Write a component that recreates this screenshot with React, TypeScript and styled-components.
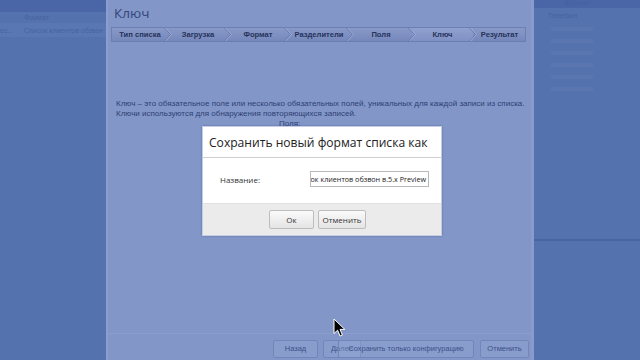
import styled, { createGlobalStyle } from 'styled-components';

const GlobalStyle = createGlobalStyle`
  html, body {
    margin: 0;
    padding: 0;
    overflow: hidden;
    background: #5472ad;
  }
  #root {
    width: 640px;
    height: 360px;
  }
`;

const Screen = styled.div`
  position: relative;
  width: 640px;
  height: 360px;
  overflow: hidden;
  display: grid;
  grid-template-columns: 106px 428px 1fr;
  background: #5472ad;
  font-family: 'Liberation Sans', Arial, sans-serif;
`;

/* list panes behind the wizard */
const SidePane = styled.div`
  display: flex;
  flex-direction: column;
  background: #5472ad;
  overflow: hidden;
`;

const PaneTopStrip = styled.div<{ $h: number }>`
  height: ${(p) => p.$h}px;
  flex: none;
  background: #4b66a6;
  color: #4560a0;
  font-size: 7px;
  line-height: 6px;
  padding-left: 30px;
  white-space: nowrap;
`;

const PaneRow = styled.div<{ $h: number; $shade?: boolean }>`
  height: ${(p) => p.$h}px;
  flex: none;
  display: flex;
  align-items: center;
  gap: 9px;
  background: ${(p) => (p.$shade ? '#5978b3' : 'transparent')};
  color: #4862a1;
  font-size: 7px;
  white-space: nowrap;
`;

const PaneCell = styled.span<{ $w?: number; $pad?: number }>`
  width: ${(p) => (p.$w ? `${p.$w}px` : 'auto')};
  padding-left: ${(p) => p.$pad ?? 0}px;
  overflow: hidden;
`;

const FaintLines = styled.div`
  display: flex;
  flex-direction: column;
  gap: 8px;
  padding: 4px 0 0 17px;
`;

const FaintLine = styled.div`
  width: 42px;
  height: 4px;
  background: #5a77b1;
  border-radius: 1px;
`;

const PaneSpacer = styled.div<{ $h: number }>`
  height: ${(p) => p.$h}px;
  flex: none;
`;

const PaneRule = styled.div`
  height: 2px;
  background: #4a64a3;
`;

/* wizard */
const Wizard = styled.div`
  display: flex;
  flex-direction: column;
  background: #8297c8;
  border-left: 2px solid #8a9ecf;
  border-right: 3px solid #889bcc;
  color: #2d3c70;
`;

const WizardTitle = styled.div`
  height: 27px;
  flex: none;
  padding-left: 6px;
  font-family: 'Open Sans', 'Noto Sans', sans-serif;
  font-size: 13.5px;
  line-height: 27px;
  color: #34457a;
`;

const Steps = styled.div`
  display: flex;
  height: 13px;
  margin: 0 5px 0 3px;
  background: linear-gradient(#8899c8, #7688bb);
  border: 1px solid #6d7fb2;
`;

const Step = styled.div<{ $w: number; $active?: boolean }>`
  position: relative;
  width: ${(p) => p.$w}px;
  flex: none;
  display: flex;
  align-items: center;
  justify-content: center;
  font-size: 7.6px;
  font-weight: bold;
  color: #26335c;
  background: ${(p) => (p.$active ? 'linear-gradient(#90a1cf, #7f91c3)' : 'transparent')};
  white-space: nowrap;
`;

const Chevron = styled.svg`
  position: absolute;
  right: -4px;
  top: 0;
  z-index: 1;
`;

const WizardBody = styled.div`
  flex: 1;
  padding: 57px 0 0 8px;
  font-size: 8px;
  line-height: 10px;
  color: #2f3f74;
`;

const Note = styled.p`
  margin: 0;
`;

const FieldsLabel = styled.div`
  margin: 0 0 0 163px;
  line-height: 9px;
`;

const WizardFooter = styled.div`
  height: 27px;
  flex: none;
  display: flex;
  justify-content: flex-end;
  align-items: center;
  padding: 3px 2px 0 0;
  box-sizing: border-box;
  border-top: 1px solid #8a9dcc;
`;

const FooterButton = styled.div<{ $w: number; $overlap?: number; $gap?: number }>`
  width: ${(p) => p.$w}px;
  height: 18px;
  box-sizing: border-box;
  margin-left: ${(p) => (p.$overlap ? -p.$overlap : p.$gap ?? 5)}px;
  display: flex;
  align-items: center;
  justify-content: center;
  border: 1px solid #7486b9;
  border-radius: 2px;
  background: rgba(150, 168, 212, 0.35);
  font-size: 7.5px;
  color: #3f5088;
  white-space: nowrap;
`;

/* modal */
const Dialog = styled.div`
  position: absolute;
  left: 202px;
  top: 126px;
  width: 238px;
  background: #fff;
  border: 1px solid #c4cde4;
  box-shadow: 0 0 2px rgba(40, 60, 110, 0.4);
  font-family: 'Open Sans', 'Noto Sans', sans-serif;
  color: #333;
`;

const DialogTitle = styled.div`
  height: 30px;
  padding-left: 6px;
  display: flex;
  align-items: center;
  border-bottom: 1px solid #cfcfcf;
  font-size: 12.1px;
  color: #222;
  white-space: nowrap;
`;

const DialogBody = styled.div`
  height: 45px;
  box-sizing: border-box;
  display: flex;
  align-items: center;
  padding: 0 12px 3px 17px;
  gap: 50px;
  font-size: 8px;
`;

const NameInput = styled.div`
  width: 120px;
  height: 16px;
  box-sizing: border-box;
  border: 1px solid #b9b9b9;
  display: flex;
  align-items: center;
  justify-content: flex-end;
  overflow: hidden;
  padding-right: 2px;
  font-size: 7.2px;
  color: #222;
  white-space: nowrap;
`;

const DialogFooter = styled.div`
  height: 31px;
  display: flex;
  align-items: center;
  gap: 4px;
  padding-left: 66px;
  background: #ebebeb;
  border-top: 1px solid #e0e0e0;
`;

const DialogButton = styled.div<{ $w: number }>`
  width: ${(p) => p.$w}px;
  height: 19px;
  box-sizing: border-box;
  display: flex;
  align-items: center;
  justify-content: center;
  border: 1px solid #bdbdbd;
  border-radius: 2px;
  background: linear-gradient(#fafafa, #e4e4e4);
  font-size: 8px;
  color: #333;
`;

const Cursor = styled.svg`
  position: absolute;
  left: 333px;
  top: 318px;
`;

const steps = [
  { label: 'Тип списка', w: 56 },
  { label: 'Загрузка', w: 60 },
  { label: 'Формат', w: 60 },
  { label: 'Разделители', w: 62 },
  { label: 'Поля', w: 62 },
  { label: 'Ключ', w: 61, active: true },
  { label: 'Результат', w: 53 },
];

export default function App() {
  return (
    <>
      <GlobalStyle />
      <Screen>
        <SidePane>
          <PaneTopStrip $h={12} />
          <PaneRow $h={11}>
            <PaneCell $w={15} />
            <PaneCell>Формат</PaneCell>
          </PaneRow>
          <PaneRow $h={14} $shade>
            <PaneCell $w={15}>ес...</PaneCell>
            <PaneCell>Список клиентов обзвон</PaneCell>
          </PaneRow>
        </SidePane>

        <Wizard>
          <WizardTitle>Ключ</WizardTitle>
          <Steps>
            {steps.map((s, i) => (
              <Step key={s.label} $w={s.w} $active={s.active}>
                {s.label}
                {i < steps.length - 1 && (
                  <Chevron width="8" height="13" viewBox="0 0 8 13">
                    <polyline points="0.5,0 6.5,6.5 0.5,13" fill="none" stroke="#6577aa" strokeWidth="1" />
                    <polyline points="1.5,0 7.5,6.5 1.5,13" fill="none" stroke="#9aaad6" strokeWidth="1" />
                  </Chevron>
                )}
              </Step>
            ))}
          </Steps>
          <WizardBody>
            <Note>
              Ключ – это обязательное поле или несколько обязательных полей, уникальных для каждой записи из списка.
            </Note>
            <Note>Ключи используются для обнаружения повторяющихся записей.</Note>
            <FieldsLabel>Поля:</FieldsLabel>
          </WizardBody>
          <WizardFooter>
            <FooterButton $w={45}>Назад</FooterButton>
            <FooterButton $w={38}>Далее</FooterButton>
            <FooterButton $w={136} $overlap={23}>
              Сохранить только конфигурацию
            </FooterButton>
            <FooterButton $w={49} $gap={6}>
              Отменить
            </FooterButton>
          </WizardFooter>
        </Wizard>

        <SidePane>
          <PaneTopStrip $h={8}>Журнал</PaneTopStrip>
          <PaneRow $h={15}>
            <PaneCell $pad={14}>Телефон</PaneCell>
          </PaneRow>
          <FaintLines>
            <FaintLine />
            <FaintLine />
            <FaintLine />
            <FaintLine />
            <FaintLine />
            <FaintLine />
          </FaintLines>
          <PaneSpacer $h={148} />
          <PaneRule />
        </SidePane>

        <Dialog>
          <DialogTitle>Сохранить новый формат списка как</DialogTitle>
          <DialogBody>
            <span>Название:</span>
            <NameInput>Список клиентов обзвон в.5.x Preview</NameInput>
          </DialogBody>
          <DialogFooter>
            <DialogButton $w={45}>Ок</DialogButton>
            <DialogButton $w={48}>Отменить</DialogButton>
          </DialogFooter>
        </Dialog>

        <Cursor width="14" height="20" viewBox="0 0 14 20">
          <path
            d="M1 1 L1 15.5 L4.6 12.2 L7.1 18 L9.4 17 L7 11.4 L11.8 11.4 Z"
            fill="#000"
            stroke="#fff"
            strokeWidth="1"
            strokeLinejoin="round"
          />
        </Cursor>
      </Screen>
    </>
  );
}
